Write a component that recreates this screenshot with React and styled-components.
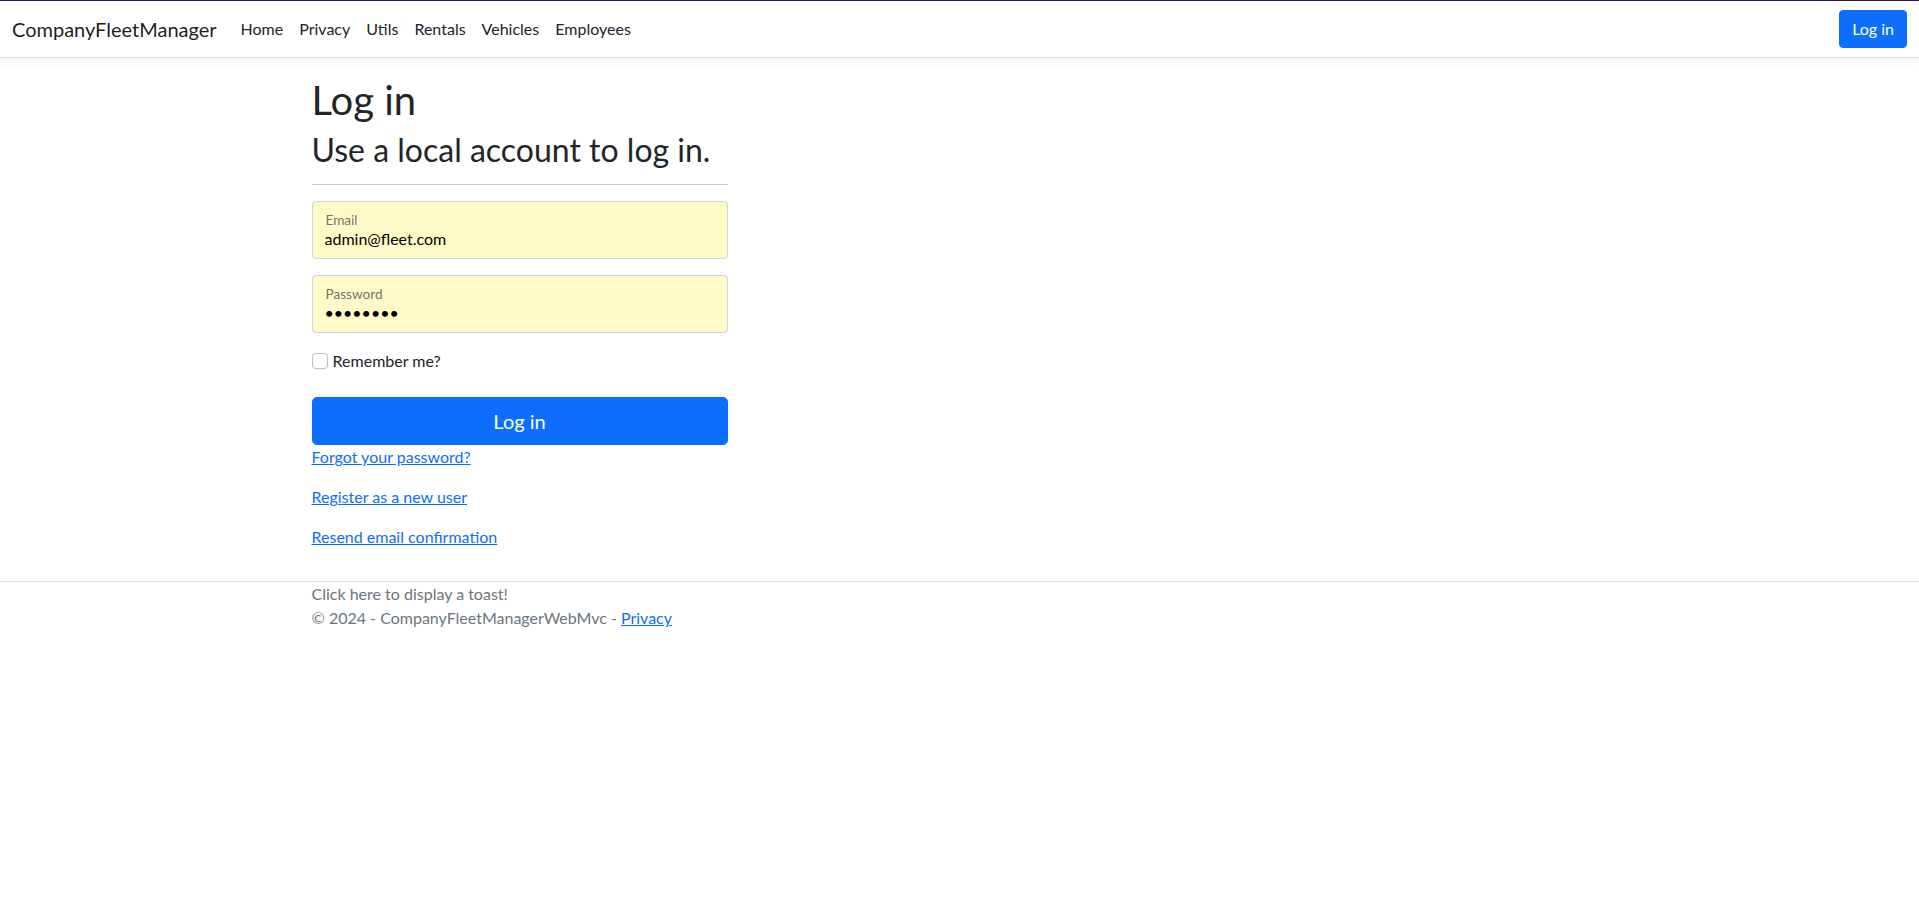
import React from "react";
import styled, { createGlobalStyle } from "styled-components";

const GlobalStyle = createGlobalStyle`
  *, *::before, *::after { box-sizing: border-box; }
  html { font-size: 16px; }
  body {
    margin: 0;
    font-family: Lato, "Noto Sans", sans-serif;
    font-size: 1rem;
    line-height: 1.5;
    color: #212529;
    background: #fff;
  }
`;

const Header = styled.header`
  border-top: 1px solid #2d1150;
  border-bottom: 1px solid #dee2e6;
  box-shadow: 0 0.25rem 0.75rem rgba(0, 0, 0, 0.05);
  margin-bottom: 16px;
  background: #fff;
`;

const Navbar = styled.nav`
  display: flex;
  align-items: center;
  padding: 8px 12px;
`;

const Brand = styled.a`
  font-size: 20px;
  line-height: 30px;
  padding: 5px 0;
  margin-right: 16px;
  color: rgba(0, 0, 0, 0.9);
  text-decoration: none;
  white-space: nowrap;
`;

const NavList = styled.ul`
  display: flex;
  list-style: none;
  margin: 0;
  padding: 0;
  flex: 1;
`;

const NavLink = styled.a`
  display: block;
  padding: 8px;
  color: #212529;
  text-decoration: none;
`;

const Button = styled.button`
  display: inline-block;
  font-family: inherit;
  font-weight: 400;
  color: #fff;
  background: #0d6efd;
  border: 1px solid #0d6efd;
  text-align: center;
  cursor: pointer;
  padding: ${(p) => (p.$large ? "8px 16px" : "6px 12px")};
  font-size: ${(p) => (p.$large ? "20px" : "16px")};
  line-height: 1.5;
  border-radius: ${(p) => (p.$large ? "4.8px" : "4px")};
  width: ${(p) => (p.$block ? "100%" : "auto")};
`;

const Container = styled.div`
  max-width: 1320px;
  margin: 0 auto;
  padding: 0 12px;
`;

const Main = styled.main`
  padding-bottom: 16px;
`;

const Title = styled.h1`
  font-size: 40px;
  font-weight: 400;
  line-height: 1.2;
  padding-top: 2px;
  margin: 0 0 6px;
`;

const Row = styled.div`
  display: flex;
  margin: 0 -12px;
`;

const Col = styled.div`
  flex: 0 0 auto;
  width: 33.33333333%;
  padding: 0 12px;
`;

const Subtitle = styled.h2`
  font-size: 32px;
  font-weight: 400;
  line-height: 1.2;
  padding-top: 1px;
  margin: 0 0 8px;
`;

const Rule = styled.hr`
  margin: 15px 0 16px;
  border: 0;
  border-top: 1px solid #c8c9ca;
`;

const Floating = styled.div`
  position: relative;
  margin-bottom: 16px;
`;

const Input = styled.input`
  display: block;
  width: 100%;
  height: 58px;
  padding: 26px 12px 10px;
  font-family: inherit;
  font-size: 16px;
  line-height: 1.5;
  color: #000;
  background: #fffac8;
  border: 1px solid #ced4da;
  border-radius: 4px;
  outline: none;
`;

const FloatLabel = styled.label`
  position: absolute;
  top: 9px;
  left: 14px;
  font-size: 13.6px;
  line-height: 1.5;
  color: rgba(33, 37, 41, 0.65);
  pointer-events: none;
`;

const CheckRow = styled.div`
  margin-bottom: 16px;
`;

const CheckLabel = styled.label`
  display: inline-block;
  margin-bottom: 8px;
`;

const Checkbox = styled.input`
  appearance: none;
  width: 16px;
  height: 16px;
  margin: 4px 1px 0 0;
  vertical-align: top;
  border: 1px solid rgba(0, 0, 0, 0.25);
  border-radius: 4px;
  background: #fff;
`;

const Para = styled.p`
  margin: 0 0 16px;
`;

const Link = styled.a`
  color: #0d6efd;
  text-decoration: underline;
`;

const Footer = styled.footer`
  border-top: 1px solid #dee2e6;
  color: #6c757d;
  line-height: 24px;
`;

const navItems = ["Home", "Privacy", "Utils", "Rentals", "Vehicles", "Employees"];

export default function App() {
  return (
    <>
      <GlobalStyle />
      <Header>
        <Navbar>
          <Brand href="#">CompanyFleetManager</Brand>
          <NavList>
            {navItems.map((item) => (
              <li key={item}>
                <NavLink href="#">{item}</NavLink>
              </li>
            ))}
          </NavList>
          <Button>Log in</Button>
        </Navbar>
      </Header>
      <Container>
        <Main>
          <Title>Log in</Title>
          <Row>
            <Col>
              <section>
                <form onSubmit={(e) => e.preventDefault()}>
                  <Subtitle>Use a local account to log in.</Subtitle>
                  <Rule />
                  <Floating>
                    <Input type="email" defaultValue="admin@fleet.com" readOnly />
                    <FloatLabel>Email</FloatLabel>
                  </Floating>
                  <Floating>
                    <Input type="password" defaultValue="Admin123" readOnly />
                    <FloatLabel>Password</FloatLabel>
                  </Floating>
                  <CheckRow>
                    <CheckLabel>
                      <Checkbox type="checkbox" /> Remember me?
                    </CheckLabel>
                  </CheckRow>
                  <div>
                    <Button $large $block type="submit">Log in</Button>
                  </div>
                  <div>
                    <Para><Link href="#">Forgot your password?</Link></Para>
                    <Para><Link href="#">Register as a new user</Link></Para>
                    <Para><Link href="#">Resend email confirmation</Link></Para>
                  </div>
                </form>
              </section>
            </Col>
          </Row>
        </Main>
      </Container>
      <Footer>
        <Container>
          <div>Click here to display a toast!</div>
          <div>
            © 2024 - CompanyFleetManagerWebMvc - <Link href="#">Privacy</Link>
          </div>
        </Container>
      </Footer>
    </>
  );
}
